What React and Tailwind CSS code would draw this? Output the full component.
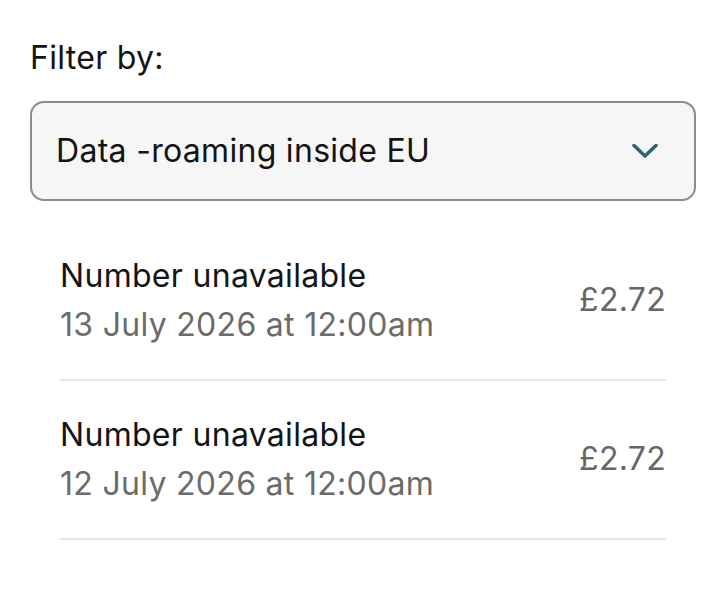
export default function App() {
  const items = [
    { title: "Number unavailable", date: "13 July 2026 at 12:00am", price: "£2.72" },
    { title: "Number unavailable", date: "12 July 2026 at 12:00am", price: "£2.72" },
  ];
  return (
    <div className="min-h-[600px] w-[726px] bg-white px-[30px] pt-[36px] font-['Inter',sans-serif] tracking-[0.3px]">
      <div className="text-[32px] leading-[44px] text-[#141414]">Filter by:</div>
      <div className="mt-[21px] flex h-[100px] items-center justify-between rounded-[14px] border-2 border-[#8c8c8c] bg-[#f6f6f6] pl-[24px] pr-[36px]">
        <span className="text-[32px] text-[#141414]">Data -roaming inside EU</span>
        <svg width="26" height="16" viewBox="0 0 26 16" fill="none">
          <path d="M2 2.5 L13 13 L24 2.5" stroke="#2c6470" strokeWidth="3.5" strokeLinecap="round" strokeLinejoin="round" />
        </svg>
      </div>
      <div className="px-[30px] pt-[21px]">
        {items.map((it, i) => (
          <div key={i} className="flex items-center justify-between border-b-2 border-[#dfe8eb] pb-[30px] pt-[29px]">
            <div className="flex flex-col">
              <span className="text-[32px] leading-[49px] text-[#141414]">{it.title}</span>
              <span className="text-[32px] leading-[49px] text-[#6b6b6b]">{it.date}</span>
            </div>
            <span className="text-[32px] text-[#666666]">{it.price}</span>
          </div>
        ))}
      </div>
    </div>
  );
}
